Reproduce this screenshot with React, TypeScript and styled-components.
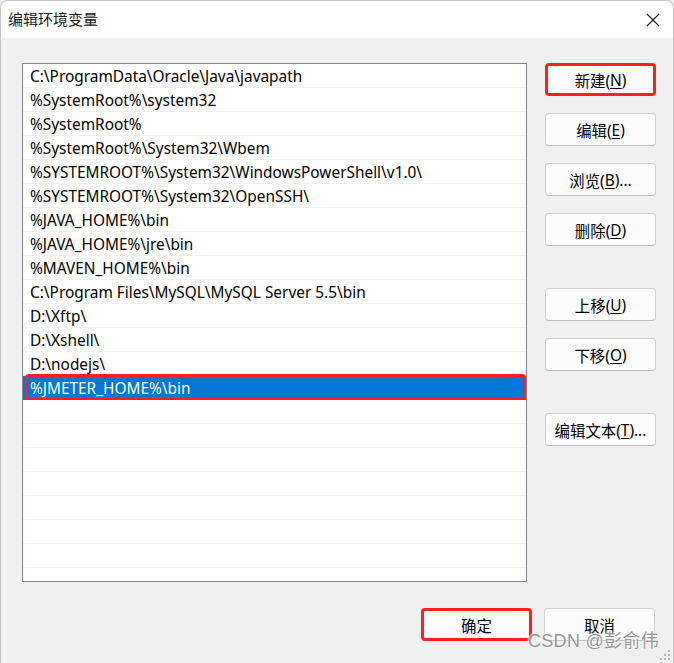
import React from 'react';
import styled, { createGlobalStyle } from 'styled-components';

const GlobalStyle = createGlobalStyle`
  html, body {
    margin: 0;
    padding: 0;
    background: #f0f0f0;
  }
  * {
    box-sizing: border-box;
  }
`;

const FONT = `"Noto Sans", "Noto Sans CJK SC", sans-serif`;

const Window = styled.div`
  position: relative;
  width: 674px;
  height: 663px;
  display: flex;
  flex-direction: column;
  background: #f0f0f0;
  border: 1px solid #c4c4c4;
  border-bottom: none;
  border-radius: 8px 8px 0 0;
  overflow: hidden;
  font-family: ${FONT};
  color: #000;
`;

const TitleBar = styled.div`
  height: 37px;
  flex-shrink: 0;
  display: flex;
  align-items: center;
  justify-content: space-between;
  background: #ffffff;
  padding: 0 13px 0 7px;
`;

const Title = styled.span`
  font-size: 15px;
  line-height: 1;
  color: #1a1a1a;
`;

const CloseButton = styled.div`
  width: 14px;
  height: 14px;
  display: flex;
  align-items: center;
  justify-content: center;
`;

const Body = styled.div`
  display: flex;
  align-items: flex-start;
  padding: 25px 0 0 21px;
`;

const ListBox = styled.div`
  width: 505px;
  height: 519px;
  background: #ffffff;
  border: 1px solid #828790;
  display: flex;
  flex-direction: column;
  overflow: hidden;
`;

const Row = styled.div<{ $selected?: boolean }>`
  position: relative;
  height: 24px;
  flex-shrink: 0;
  display: flex;
  align-items: center;
  padding: 2px 0 0 7px;
  font-size: 15.4px;
  white-space: nowrap;
  color: ${(p) => (p.$selected ? '#ffffff' : '#000000')};
  background: ${(p) => (p.$selected ? '#0078d7' : '#ffffff')};
  border-bottom: 1px solid ${(p) => (p.$selected ? '#0078d7' : '#f0f0f0')};

  ${(p) =>
    p.$selected &&
    `
    &::after {
      content: '';
      position: absolute;
      left: 2px;
      right: 0;
      top: -2px;
      bottom: -2px;
      border: 3px solid #ff1f1f;
      border-radius: 4px;
    }
  `}
`;

const ButtonColumn = styled.div`
  display: flex;
  flex-direction: column;
  margin-left: 18px;
`;

const Button = styled.div<{ $marked?: boolean; $gap?: number }>`
  width: 111px;
  height: 33px;
  margin-top: ${(p) => p.$gap ?? 0}px;
  display: flex;
  align-items: center;
  justify-content: center;
  padding-top: 1px;
  font-size: 15.4px;
  color: #000;
  background: #fbfbfb;
  border: ${(p) => (p.$marked ? '3px solid #ff1f1f' : '1px solid #d0d0d0')};
  border-bottom-color: ${(p) => (p.$marked ? '#ff1f1f' : '#bcbcbc')};
  border-radius: 4px;
  white-space: nowrap;

  u {
    text-underline-offset: 2px;
  }
`;

const Footer = styled.div`
  display: flex;
  justify-content: flex-end;
  gap: 12px;
  padding: 26px 18px 0 0;
`;

const Watermark = styled.div`
  position: absolute;
  right: 14px;
  bottom: 11px;
  font-size: 18px;
  font-family: "Liberation Sans", "Noto Sans CJK SC", sans-serif;
  color: rgba(130, 130, 130, 0.85);
  text-shadow: 0 0 2px #ffffff, 0 0 2px #ffffff;
  letter-spacing: 0.3px;
  pointer-events: none;
`;

const Grip = styled.svg`
  position: absolute;
  right: 2px;
  bottom: 2px;
`;

const paths = [
  'C:\\ProgramData\\Oracle\\Java\\javapath',
  '%SystemRoot%\\system32',
  '%SystemRoot%',
  '%SystemRoot%\\System32\\Wbem',
  '%SYSTEMROOT%\\System32\\WindowsPowerShell\\v1.0\\',
  '%SYSTEMROOT%\\System32\\OpenSSH\\',
  '%JAVA_HOME%\\bin',
  '%JAVA_HOME%\\jre\\bin',
  '%MAVEN_HOME%\\bin',
  'C:\\Program Files\\MySQL\\MySQL Server 5.5\\bin',
  'D:\\Xftp\\',
  'D:\\Xshell\\',
  'D:\\nodejs\\',
  '%JMETER_HOME%\\bin',
];

const EMPTY_ROWS = 8;

const sideButtons = [
  { label: '新建', key: 'N', gap: 0, marked: true },
  { label: '编辑', key: 'E', gap: 17 },
  { label: '浏览', key: 'B', gap: 17, dots: true },
  { label: '删除', key: 'D', gap: 17 },
  { label: '上移', key: 'U', gap: 42 },
  { label: '下移', key: 'O', gap: 17 },
  { label: '编辑文本', key: 'T', gap: 42, dots: true },
];

const App: React.FC = () => {
  return (
    <>
      <GlobalStyle />
      <Window>
        <TitleBar>
          <Title>编辑环境变量</Title>
          <CloseButton>
            <svg width="14" height="14" viewBox="0 0 14 14">
              <path d="M1 1 L13 13 M13 1 L1 13" stroke="#1a1a1a" strokeWidth="1.1" />
            </svg>
          </CloseButton>
        </TitleBar>

        <Body>
          <ListBox>
            {paths.map((p, i) => (
              <Row key={p} $selected={i === paths.length - 1}>
                {p}
              </Row>
            ))}
            {Array.from({ length: EMPTY_ROWS }).map((_, i) => (
              <Row key={`empty-${i}`} />
            ))}
          </ListBox>

          <ButtonColumn>
            {sideButtons.map((b) => (
              <Button key={b.label} $gap={b.gap} $marked={b.marked}>
                {b.label}(<u>{b.key}</u>){b.dots ? '...' : ''}
              </Button>
            ))}
          </ButtonColumn>
        </Body>

        <Footer>
          <Button $marked>确定</Button>
          <Button>取消</Button>
        </Footer>

        <Watermark>CSDN @彭俞伟</Watermark>
        <Grip width="12" height="12" viewBox="0 0 12 12">
          {[
            [9, 1],
            [9, 5],
            [5, 5],
            [9, 9],
            [5, 9],
            [1, 9],
          ].map(([x, y]) => (
            <rect key={`${x}-${y}`} x={x} y={y} width="2" height="2" fill="#b5b5b5" />
          ))}
        </Grip>
      </Window>
    </>
  );
};

export default App;
